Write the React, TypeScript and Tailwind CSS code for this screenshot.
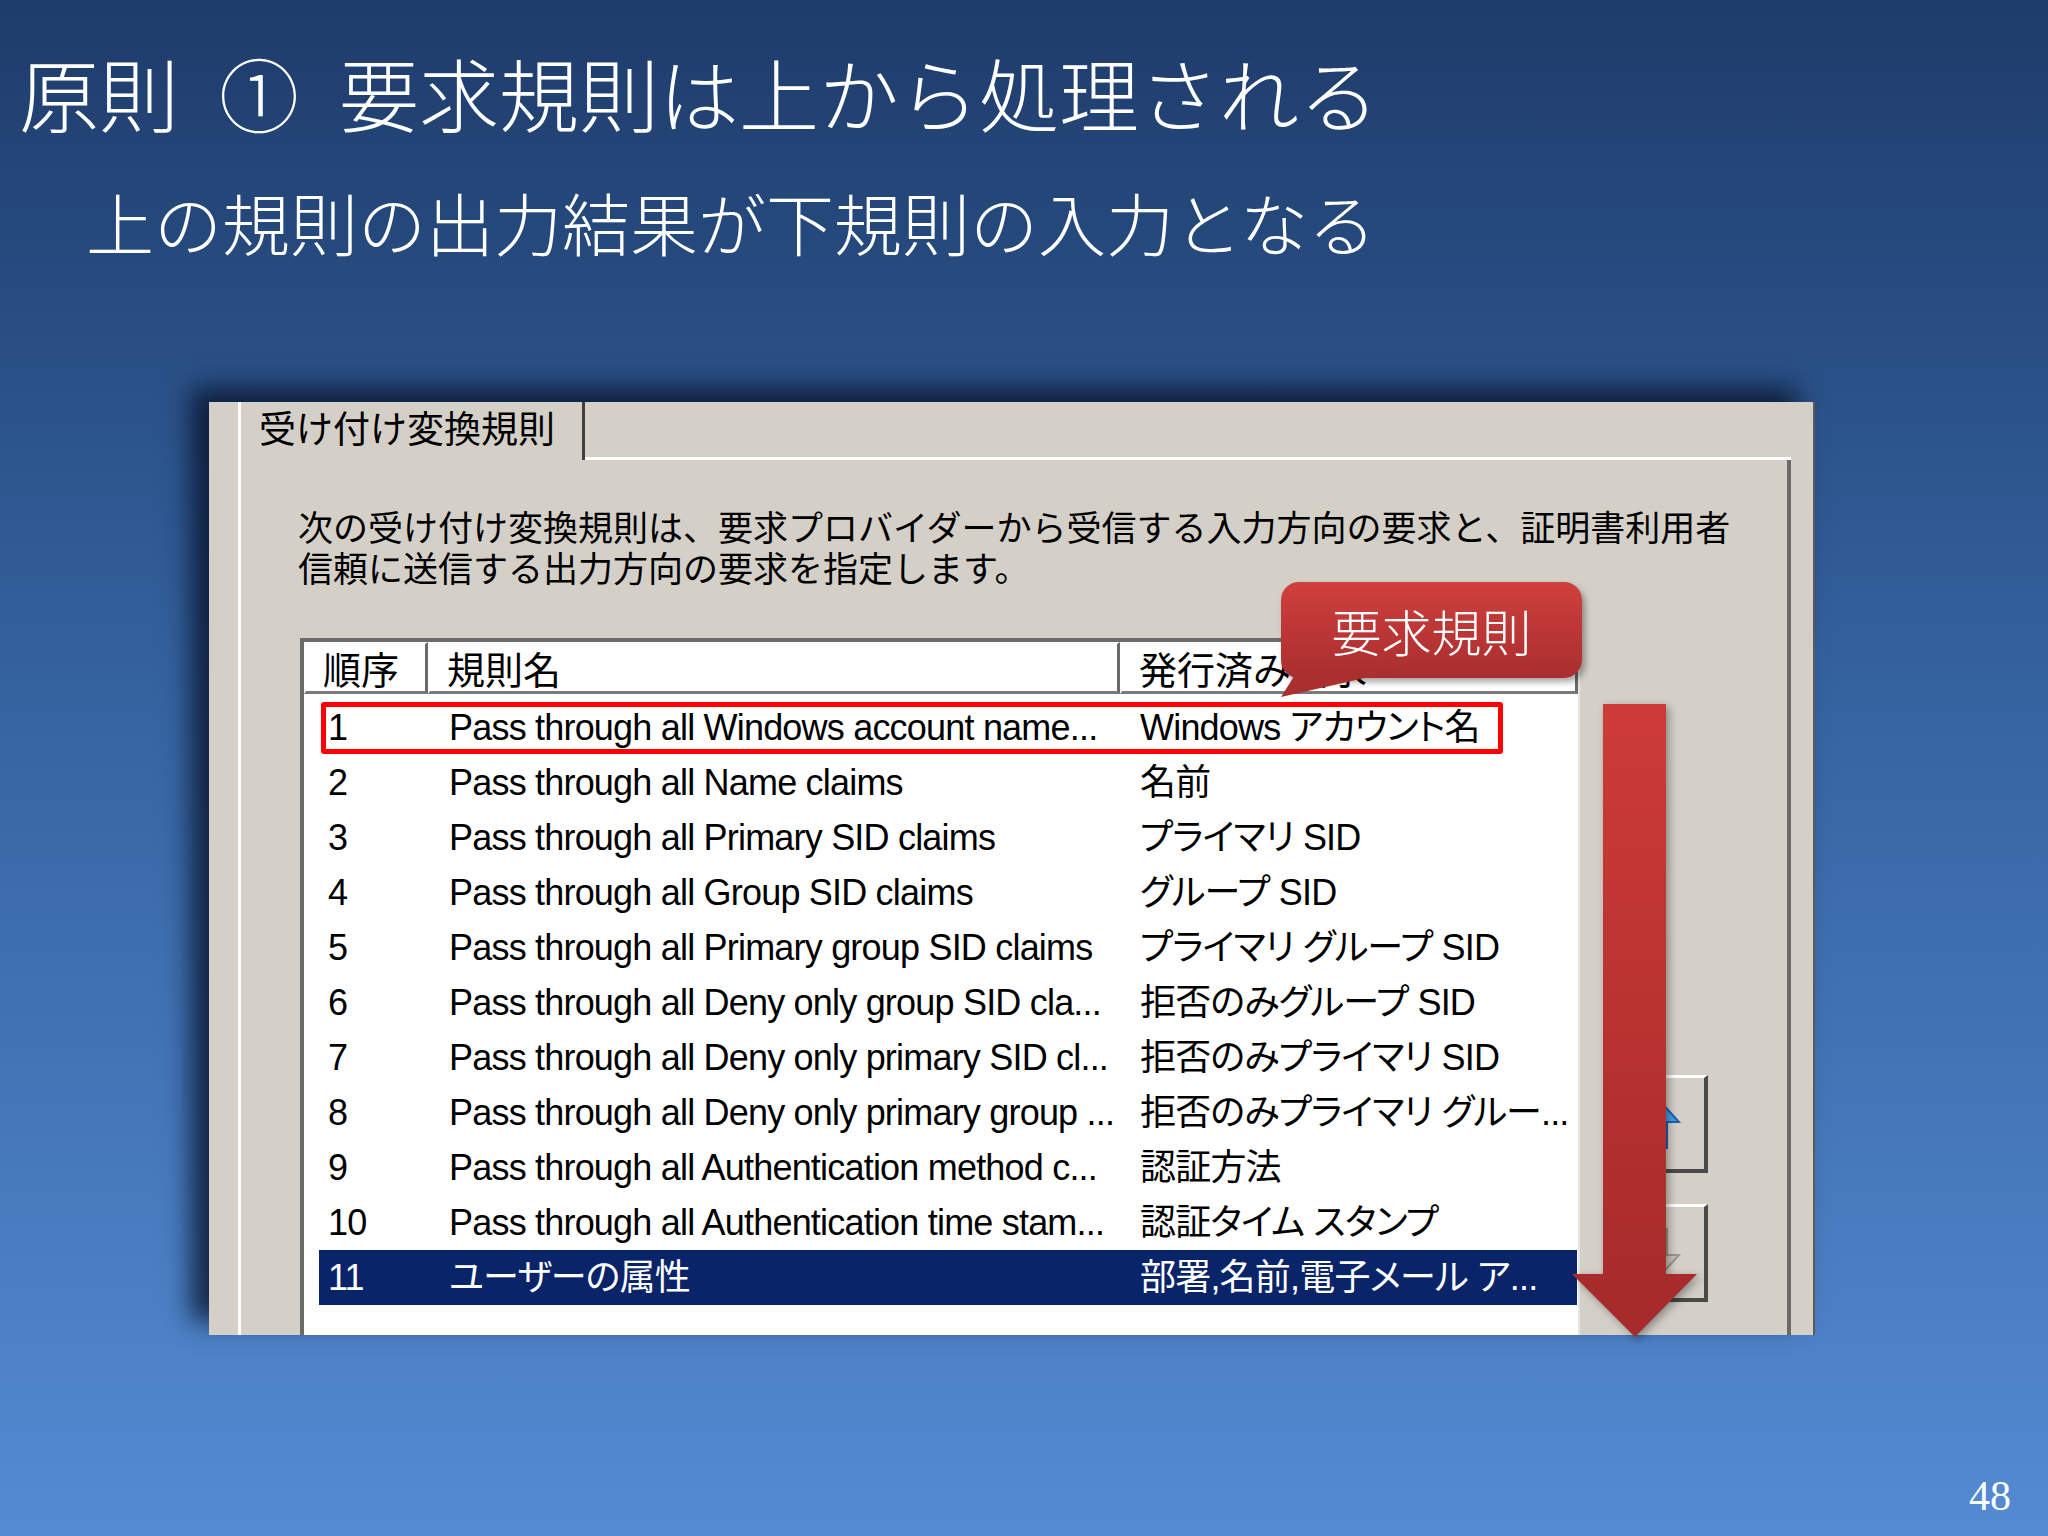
import React from 'react';

const rows = [
  { no: '1', name: 'Pass through all Windows account name...', issued: 'Windows アカウント名' },
  { no: '2', name: 'Pass through all Name claims', issued: '名前' },
  { no: '3', name: 'Pass through all Primary SID claims', issued: 'プライマリ SID' },
  { no: '4', name: 'Pass through all Group SID claims', issued: 'グループ SID' },
  { no: '5', name: 'Pass through all Primary group SID claims', issued: 'プライマリ グループ SID' },
  { no: '6', name: 'Pass through all Deny only group SID cla...', issued: '拒否のみグループ SID' },
  { no: '7', name: 'Pass through all Deny only primary SID cl...', issued: '拒否のみプライマリ SID' },
  { no: '8', name: 'Pass through all Deny only primary group ...', issued: '拒否のみプライマリ グルー...' },
  { no: '9', name: 'Pass through all Authentication method c...', issued: '認証方法' },
  { no: '10', name: 'Pass through all Authentication time stam...', issued: '認証タイム スタンプ' },
  { no: '11', name: 'ユーザーの属性', issued: '部署,名前,電子メール ア...' },
];

const jp = "font-['Noto_Sans_CJK_JP',sans-serif]";
const listFont = "font-['Liberation_Sans','Noto_Sans_CJK_JP',sans-serif]";

function HeaderCell({ label, width }: { label: string; width: string }) {
  return (
    <div
      className={`${width} h-[52px] shrink-0 flex items-center pl-[17px] border-t-2 border-l-2 border-white border-r-[3px] border-b-[3px] border-r-[#6a6a6a] border-b-[#7a7a7a] text-[38px] leading-none text-black ${jp}`}
    >
      {label}
    </div>
  );
}

function ClaimList() {
  return (
    <div className="w-[1280px] h-[760px] shrink-0 bg-white border-t-4 border-l-4 border-[#6b6b6b] border-r-2 border-r-[#e6e6e6]">
      <div className="flex">
        <HeaderCell label="順序" width="w-[124px]" />
        <HeaderCell label="規則名" width="w-[692px]" />
        <HeaderCell label="発行済み要求" width="flex-1" />
      </div>
      <div className={`pt-[6px] pl-[15px] ${listFont} text-[36px] tracking-[-0.8px] [font-feature-settings:'palt']`}>
        {rows.map((r, i) => {
          const selected = i === rows.length - 1;
          return (
            <div
              key={r.no}
              className={`relative h-[55px] w-[1258px] flex items-center whitespace-nowrap ${
                selected ? 'bg-[#0a246a] text-white' : 'text-black'
              }`}
            >
              <div className="w-[130px] pl-[9px] shrink-0">{r.no}</div>
              <div className="w-[691px] shrink-0 overflow-hidden">{r.name}</div>
              <div className="flex-1">{r.issued}</div>
              {i === 0 && (
                <div className="absolute left-[2px] top-[2px] w-[1182px] h-[52px] border-[5px] border-[#ff0000] rounded-[3px]" />
              )}
            </div>
          );
        })}
      </div>
    </div>
  );
}

function MoveButton({ dir }: { dir: 'up' | 'down' }) {
  return (
    <div className="w-[98px] h-[98px] bg-[#d4d0c8] border-t-[3px] border-l-[3px] border-white border-r-4 border-b-4 border-r-[#4a4a4a] border-b-[#4a4a4a] flex items-center justify-center">
      {dir === 'up' ? (
        <svg width="44" height="52" viewBox="0 0 44 52">
          <polygon points="22,2 42,24 30,24 30,50 14,50 14,24 2,24" fill="#4a9be6" stroke="#1e5fb0" strokeWidth="2" />
        </svg>
      ) : (
        <svg width="44" height="52" viewBox="0 0 44 52">
          <polygon points="22,50 42,28 30,28 30,2 14,2 14,28 2,28" fill="#c8c4bc" stroke="#9a968e" strokeWidth="2" />
        </svg>
      )}
    </div>
  );
}

function DialogShot() {
  return (
    <div className="ml-[209px] mt-[146px] w-[1606px] h-[933px] bg-[#d4d0c8] border-r-2 border-[#5a5a5a] overflow-hidden flex shadow-[-18px_-14px_24px_rgba(8,18,40,0.8)]">
      <div className="w-[29px] shrink-0" />
      <div className="w-[1553px] shrink-0 flex flex-col">
        <div className="h-[58px] flex shrink-0">
          <div className={`w-[347px] shrink-0 border-l-[3px] border-white border-r-[3px] border-r-[#404040] flex items-center pl-[18px] pb-[10px] pt-[2px] text-[37px] leading-[44px] text-black ${jp}`}>
            受け付け変換規則
          </div>
          <div className="flex-1 border-b-[3px] border-white" />
        </div>
        <div className="flex-1 border-l-[3px] border-white border-r-4 border-r-[#696969] pl-[57px] pt-[45px]">
          <div className={`text-[35px] leading-[41px] text-black whitespace-nowrap ${jp}`}>
            <p>次の受け付け変換規則は、要求プロバイダーから受信する入力方向の要求と、証明書利用者</p>
            <p>信頼に送信する出力方向の要求を指定します。</p>
          </div>
          <div className="flex mt-[51px] ml-[2px]">
            <ClaimList />
            <div className="ml-[30px] pt-[437px] flex flex-col gap-[31px]">
              <MoveButton dir="up" />
              <MoveButton dir="down" />
            </div>
          </div>
        </div>
      </div>
    </div>
  );
}

export default function App() {
  return (
    <div className="relative w-[2048px] h-[1536px] overflow-hidden bg-gradient-to-b from-[#1e3c6b] via-[#3563a0] via-45% to-[#548bd3] text-white">
      <h1 className={`pt-[51px] pl-[19px] text-[80px] leading-[80px] font-light whitespace-nowrap ${jp}`}>
        原則{'\u2002'}①{'\u2002'}要求規則は上から処理される
      </h1>
      <h2 className={`mt-[57px] pl-[86px] text-[68px] leading-[68px] font-light whitespace-nowrap ${jp}`}>
        上の規則の出力結果が下規則の入力となる
      </h2>

      <DialogShot />

      <div className="mt-[140px] pr-[37px] flex justify-end">
        <span className="text-[42px] leading-[42px] font-['Liberation_Serif',serif]">48</span>
      </div>

      {/* callout */}
      <div className="absolute left-[1281px] top-[582px] w-[301px] h-[96px] rounded-[18px] bg-gradient-to-b from-[#d0403d] to-[#a82e2e] shadow-[3px_4px_6px_rgba(0,0,0,0.35)] flex items-center justify-center">
        <span className={`text-[50px] leading-none font-light text-white ${jp}`}>要求規則</span>
      </div>
      <svg className="absolute left-[1276px] top-[670px]" width="140" height="32" viewBox="0 0 140 32">
        <polygon points="22,0 124,0 5,27" fill="#aa2f2f" />
      </svg>

      {/* downward arrow */}
      <svg
        className="absolute left-[1565px] top-[700px] drop-shadow-[3px_3px_4px_rgba(0,0,0,0.35)]"
        width="140"
        height="645"
        viewBox="0 0 140 645"
      >
        <defs>
          <linearGradient id="arrowGrad" x1="0" y1="0" x2="0" y2="1">
            <stop offset="0" stopColor="#cd3b38" />
            <stop offset="1" stopColor="#a52a2a" />
          </linearGradient>
        </defs>
        <polygon points="38,4 101,4 101,574 132,574 70,637 7,574 38,574" fill="url(#arrowGrad)" />
      </svg>
    </div>
  );
}
